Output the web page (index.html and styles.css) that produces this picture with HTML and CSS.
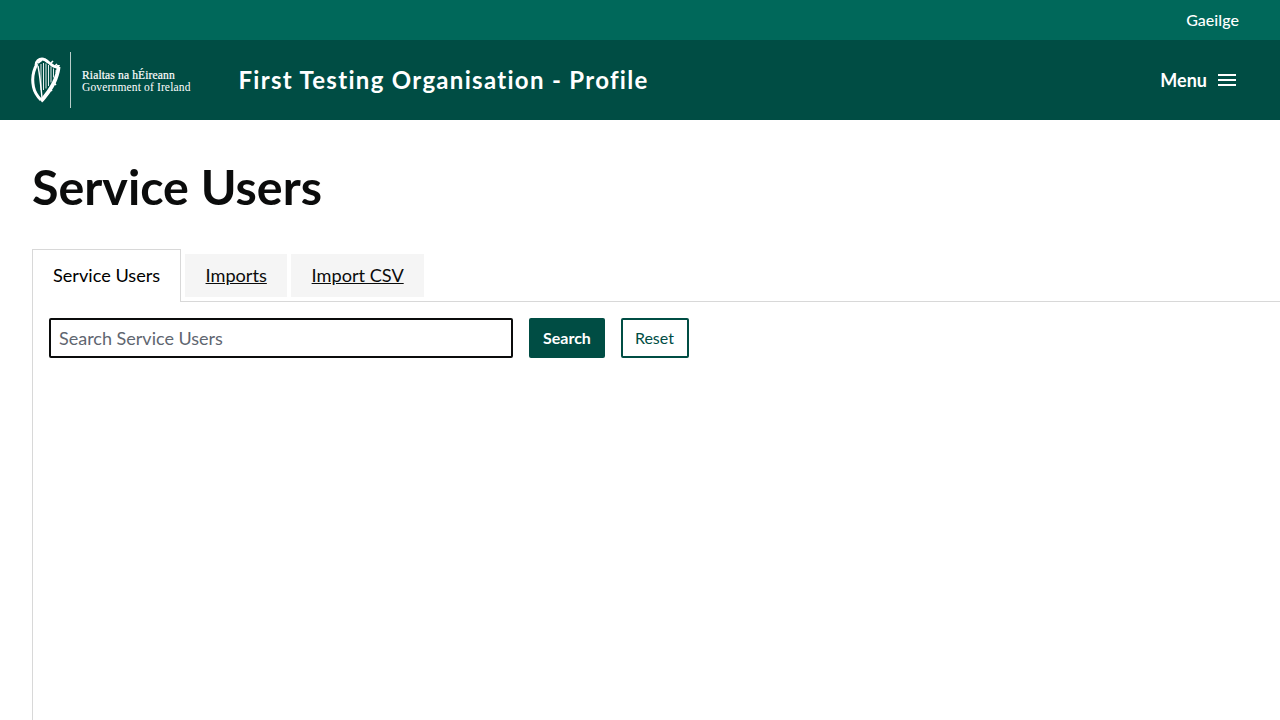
FILE: index.html
```html
<!DOCTYPE html>
<html lang="en">
<head>
<meta charset="utf-8">
<title>Service Users</title>
<link rel="stylesheet" href="styles.css">
</head>
<body>
<div class="topbar"><a class="lang" href="#">Gaeilge</a></div>
<header class="header">
  <a class="logo" href="#">
    <svg class="harp" width="32" height="48" viewBox="0 0 32 48" fill="none" stroke="#fff">
      <path d="M7 8C3 15 2 24 3.500 31c1 5 3.500 9 7.500 13" stroke-width="3"/>
      <path d="M6 9C6 5 9 3 12 3c3 0 5 2 8 4.500 2 1.800 4.500 3.500 6.500 3.500 1 0 2-1 2-2" stroke-width="2.800"/>
      <path d="M28.500 11c0 4-1.500 8-3 12-2.500 7-7 13-11 18-1 1.200-2 3-3.500 4" stroke-width="3.800"/>
      <path d="M8 10c2 10 3 21 4 32" stroke-width="1.400"/>
      <path d="M11 8v26M13.500 7v27M16 7.500v25M18.500 9v21M21 10.500v16M23.500 12.500v9M26 14v3" stroke-width=".9"/>
      <path d="M8 7l4-3M15 3l2 3M21 7l2-2M25 10l2-2M24 27l2 2M20 33l2 2M16 38l2 1" stroke-width="1.600"/>
    </svg>
    <span class="logo-rule"></span>
    <span class="logo-text"><span class="logo-ga">Rialtas na hÉireann</span><span class="logo-en">Government of Ireland</span></span>
  </a>
  <div class="site-title">First Testing Organisation - Profile</div>
  <button class="menu" type="button">Menu
    <svg width="24" height="24" viewBox="0 0 24 24" fill="#fff"><path d="M3 18h18v-2H3v2zm0-5h18v-2H3v2zm0-7v2h18V6H3z"/></svg>
  </button>
</header>
<main class="main">
  <h1 class="title">Service Users</h1>
  <nav class="tabs">
    <a class="tab tab-active" href="#">Service Users</a>
    <a class="tab" href="#">Imports</a>
    <a class="tab" href="#">Import CSV</a>
  </nav>
  <section class="panel">
    <form class="search">
      <input class="search-input" type="text" placeholder="Search Service Users">
      <button class="btn btn-primary" type="button">Search</button>
      <button class="btn btn-secondary" type="button">Reset</button>
    </form>
  </section>
</main>
</body>
</html>
```
FILE: styles.css
```css
* { box-sizing: border-box; }
html, body { height: 100%; }
body {
  margin: 0;
  display: flex;
  flex-direction: column;
  height: 720px;
  overflow: hidden;
  background: #fff;
  color: #0b0c0c;
  font-family: Lato, "Liberation Sans", sans-serif;
}
.topbar {
  height: 40px;
  flex: none;
  background: #00685a;
  display: flex;
  align-items: center;
  justify-content: flex-end;
  padding: 0 41px 2px 0;
}
.lang { color: #fff; font-size: 16px; font-weight: 500; letter-spacing: .05px; text-decoration: none; }
.header {
  height: 80px;
  flex: none;
  background: #004d44;
  display: flex;
  align-items: center;
  padding: 0 41px 0 30px;
  color: #fff;
}
.logo { display: flex; align-items: center; color: #fff; text-decoration: none; width: 208.5px; flex: none; }
.harp { flex: none; margin-right: 8px; }
.logo-rule { width: 1px; height: 56px; background: #b9cdc9; margin-right: 11px; flex: none; }
.logo-text { display: flex; flex-direction: column; padding-top: 2px; font-family: "Liberation Serif", serif; font-size: 11.5px; line-height: 12px; white-space: nowrap; }
.logo-ga { letter-spacing: .15px; -webkit-text-stroke: .2px #fff; }
.logo-en { letter-spacing: .15px; }
.site-title { font-size: 24px; font-weight: 700; letter-spacing: 1.3px; flex: 1; padding-bottom: 2px; }
.menu {
  display: flex;
  align-items: center;
  gap: 8px;
  background: none;
  border: 0;
  padding: 0;
  color: #fff;
  font: 700 18px Lato, "Liberation Sans", sans-serif;
}
.main { flex: 1; display: flex; flex-direction: column; padding-left: 32px; min-height: 0; }
.title { margin: 36px 0 33px; font-size: 48.4px; line-height: 60px; font-weight: 700; }
.tabs { display: flex; align-items: center; gap: 4px; height: 53px; flex: none; margin-bottom: -1px; position: relative; z-index: 1; }
.tab {
  height: 43px;
  display: flex;
  align-items: center;
  padding: 0 20.4px 2px;
  background: #f5f5f5;
  color: #0b0c0c;
  font-size: 18.15px;
  text-decoration: underline;
}
.tab-active {
  height: 53px;
  padding: 0 20px 2px;
  background: #fff;
  border: 1px solid #d8d8d8;
  border-bottom: 0;
  text-decoration: none;
  color: #000;
}
.panel { flex: 1; border-top: 1px solid #d8d8d8; border-left: 1px solid #d8d8d8; padding: 16px; }
.search { display: flex; gap: 16px; }
.search-input {
  width: 464px;
  height: 40px;
  border: 2px solid #0b0c0c;
  border-radius: 2px;
  padding: 0 8px;
  font: 18px Lato, "Liberation Sans", sans-serif;
  color: #0b0c0c;
  outline: 0;
}
.search-input::placeholder { color: #5f6670; opacity: 1; }
.btn { height: 40px; padding: 0 14px 2px; border-radius: 2px; font: 16px Lato, "Liberation Sans", sans-serif; }
.btn-primary { background: #004d44; border: 0; color: #fff; font-weight: 700; }
.btn-secondary { background: #fff; border: 2px solid #004d44; color: #004d44; padding: 0 13px 2px 12px; }
```
